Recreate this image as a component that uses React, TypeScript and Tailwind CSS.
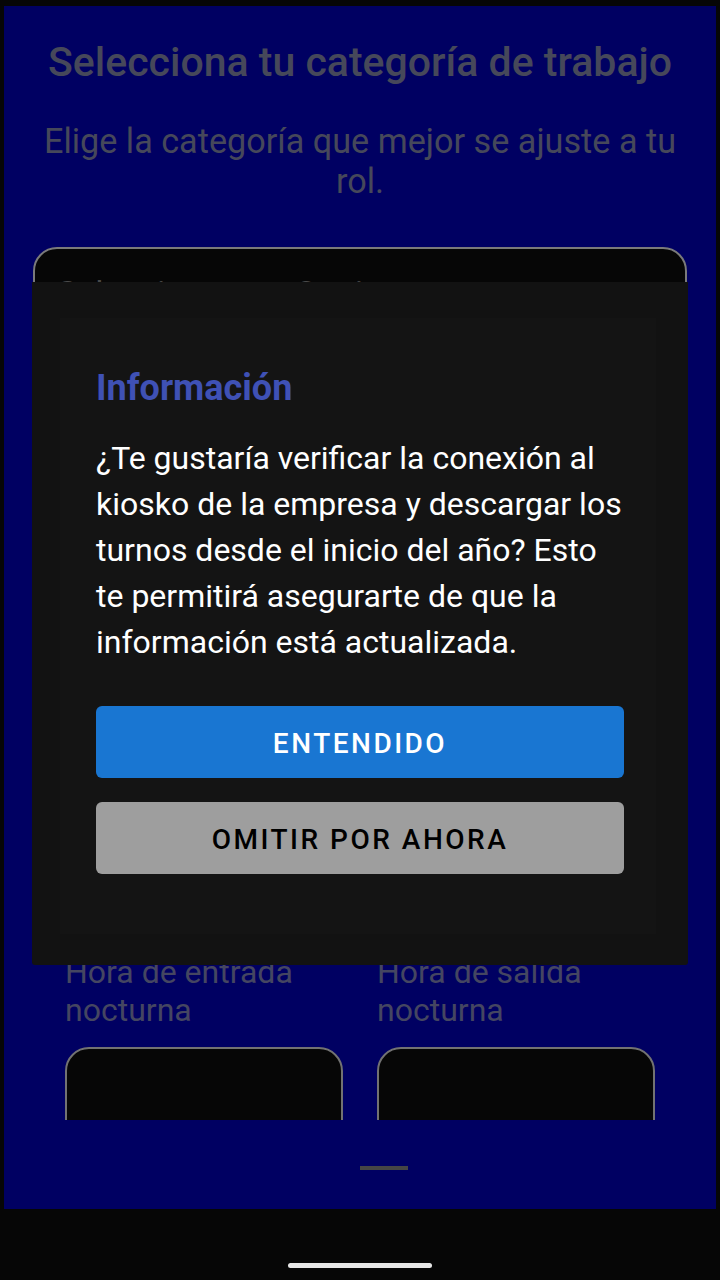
import React from "react";

const font = { fontFamily: "Roboto, 'Noto Sans', sans-serif" };

function TimeField({ label }: { label: string }) {
  return (
    <div className="flex flex-col">
      <div className="text-[32px] leading-[38px] text-[#454661]">{label}</div>
      <div className="mt-[18px] h-[120px] rounded-[24px] border-2 border-[#727272] bg-[#060606]" />
    </div>
  );
}

export default function App() {
  return (
    <div className="relative w-[720px] h-[1280px] bg-[#060606] overflow-hidden" style={font}>
      <div className="ml-[4px] pt-[6px] w-[712px]">
        <div className="bg-[#000062] h-[1203px] flex flex-col">
          <div className="h-[1114px] shrink-0 overflow-hidden">
            <h1 className="pt-[32px] text-center text-[41px] leading-[48px] font-medium text-[#46485a]">
              Selecciona tu categoría de trabajo
            </h1>
            <p className="mt-[35px] px-[30px] text-center text-[34.2px] leading-[40px] text-[#46485a]">
              Elige la categoría que mejor se ajuste a tu rol.
            </p>
            <div className="mt-[46px] mx-[29px] h-[104px] rounded-[24px] border-2 border-[#7a7a7a] bg-[#060606] px-[22px] pt-[22px]">
              <span className="text-[34px] leading-[44px] text-[#4a4a4a]">Seleccione una Opcion</span>
            </div>
            <div className="h-[602px]" />
            <div className="px-[61px] grid grid-cols-2 gap-[34px]">
              <TimeField label="Hora de entrada nocturna" />
              <TimeField label="Hora de salida nocturna" />
            </div>
          </div>
          <div className="mt-[46px] ml-[356px] w-[48px] h-[4px] bg-[#454545]" />
        </div>
      </div>

      <div className="absolute left-[288px] top-[1263px] w-[144px] h-[5px] rounded-full bg-[#e6e6e6]" />

      <div className="absolute left-[32px] top-[282px] w-[656px] h-[683px] bg-[#121212] rounded-b-[3px] pt-[36px] pl-[28px] pr-[32px]">
        <div className="h-[616px] bg-[#141414] pl-[36px] pr-[32px] pt-[46px] flex flex-col">
          <h2 className="text-[36px] leading-[48px] font-bold text-[#3f51b5]">Información</h2>
          <p className="mt-[23px] text-[32px] leading-[46px] text-white">
            ¿Te gustaría verificar la conexión al kiosko de la empresa y descargar los turnos desde el inicio del año? Esto te permitirá asegurarte de que la información está actualizada.
          </p>
          <button className="mt-[41px] h-[72px] shrink-0 w-full rounded-[6px] bg-[#1976d2] text-white text-[28px] font-medium tracking-[2.5px] leading-[72px] pt-[2px]">
            ENTENDIDO
          </button>
          <button className="mt-[24px] h-[72px] shrink-0 w-full rounded-[6px] bg-[#9e9e9e] text-black text-[28px] font-medium tracking-[2.5px] leading-[72px] pt-[2px]">
            OMITIR POR AHORA
          </button>
        </div>
      </div>
    </div>
  );
}
